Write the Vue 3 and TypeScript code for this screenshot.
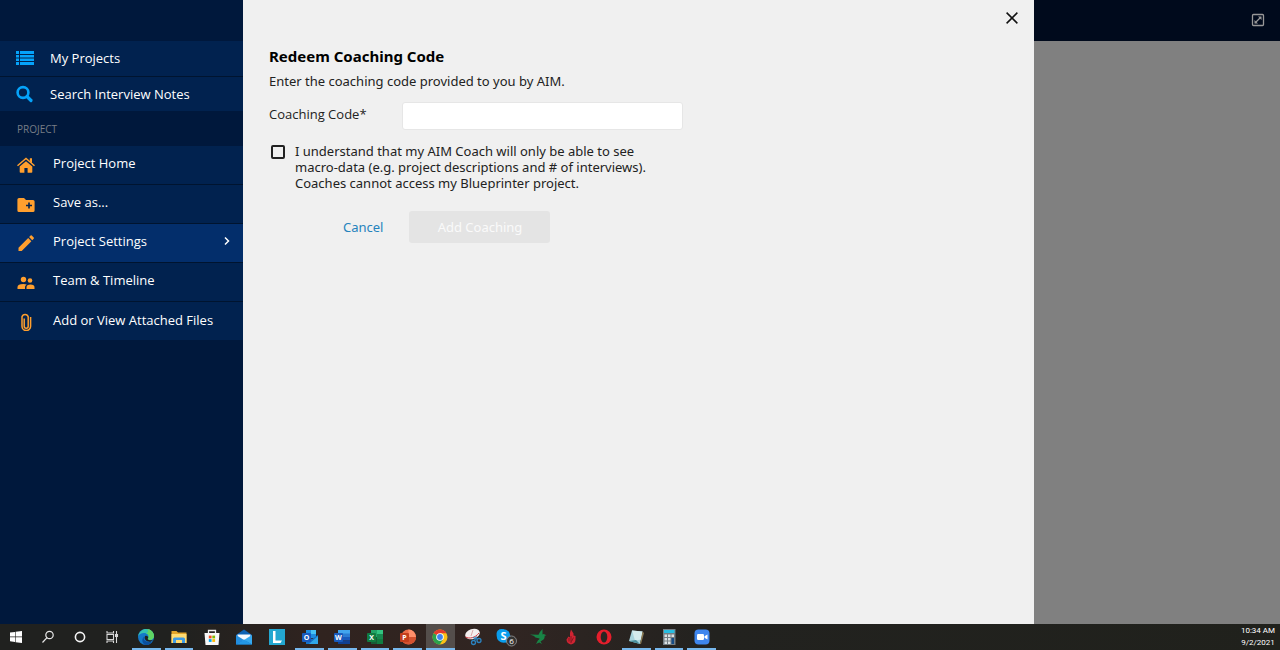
<script setup lang="ts">
import { computed, ref } from 'vue'

interface NavItem {
  label: string
  icon: string
  active?: boolean
}

const mainItems: NavItem[] = [
  { label: 'My Projects', icon: 'list' },
  { label: 'Search Interview Notes', icon: 'search' },
]

const projectItems: NavItem[] = [
  { label: 'Project Home', icon: 'home' },
  { label: 'Save as...', icon: 'folder' },
  { label: 'Project Settings', icon: 'pencil', active: true },
  { label: 'Team & Timeline', icon: 'team' },
  { label: 'Add or View Attached Files', icon: 'clip' },
]

interface TaskApp {
  name: string
  open?: boolean
  current?: boolean
}

const apps: TaskApp[] = [
  { name: 'Edge', open: true },
  { name: 'Explorer', open: true },
  { name: 'Store' },
  { name: 'Mail' },
  { name: 'Lync' },
  { name: 'Outlook', open: true },
  { name: 'Word', open: true },
  { name: 'Excel', open: true },
  { name: 'PowerPoint', open: true },
  { name: 'Chrome', open: true, current: true },
  { name: 'Snip' },
  { name: 'Skype' },
  { name: 'Hummingbird' },
  { name: 'Flame' },
  { name: 'Opera' },
  { name: 'Notepad', open: true },
  { name: 'Calculator', open: true },
  { name: 'Zoom', open: true },
]

const code = ref('')
const agreed = ref(false)
const ready = computed(() => code.value.trim() !== '' && agreed.value)
</script>

<template>
  <div class="screen">
    <div class="workspace">
      <aside class="sidebar">
        <nav class="group main-group">
          <a v-for="item in mainItems" :key="item.label" href="#" class="nav-row">
            <svg v-if="item.icon === 'list'" class="nav-icon blue" viewBox="0 0 18 18">
              <path d="M0 2h3v3H0zM4 2h14v3H4zM0 6h3v2.600H0zM4 6h14v2.600H4zM0 9.500h3v2.600H0zM4 9.500h14v2.600H4zM0 13h3v3H0zM4 13h14v3H4z" />
            </svg>
            <svg v-else class="nav-icon blue" viewBox="0 0 18 18">
              <circle cx="7" cy="7.500" r="5.400" fill="none" stroke="currentColor" stroke-width="2.600" />
              <path d="M11 11.500l4 4" fill="none" stroke="currentColor" stroke-width="3.200" stroke-linecap="round" />
            </svg>
            <span>{{ item.label }}</span>
          </a>
        </nav>
        <div class="section-title">PROJECT</div>
        <nav class="group project-group">
          <a v-for="item in projectItems" :key="item.label" href="#" class="nav-row" :class="{ active: item.active }">
            <svg v-if="item.icon === 'home'" class="nav-icon" viewBox="0 0 18 18">
              <path d="M9 5.300L2.700 10.500V16q0 .8.800.8H7.400V12h3.200v4.800h3.900q.8 0 .8-.8v-5.500z" />
              <path d="M.5 9.700L9 2.500l8.500 7.200" fill="none" stroke="currentColor" stroke-width="1.500" />
              <path d="M12.800 2.200h2.200v5l-2.200-2z" />
            </svg>
            <svg v-else-if="item.icon === 'folder'" class="nav-icon" viewBox="0 0 18 18">
              <path d="M2 3h5l2 2h7q1.600 0 1.600 1.600v8.800q0 1.600-1.600 1.600H2Q.4 17 .4 15.400V4.600Q.4 3 2 3z" />
              <path d="M12 7.500v6M9 10.500h6" stroke="#01224f" stroke-width="1.600" />
            </svg>
            <svg v-else-if="item.icon === 'pencil'" class="nav-icon" viewBox="0 0 18 18">
              <path d="M1.500 13.800L11.200 4l3.200 3.200L4.700 17H1.500zM12.100 3.100l1.500-1.500q.6-.6 1.200 0l1.900 1.900q.6.6 0 1.200l-1.500 1.500z" />
            </svg>
            <svg v-else-if="item.icon === 'team'" class="nav-icon" viewBox="0 0 18 18">
              <circle cx="6.500" cy="6.500" r="2.700" />
              <circle cx="13" cy="7.500" r="2.300" />
              <path d="M.5 16v-2q0-3 6-3 1.800 0 3.200.4Q8 12.500 8 14v2zM9.500 16v-1.600q0-2.800 4-2.800t4 2.800V16z" />
            </svg>
            <svg v-else class="nav-icon" viewBox="0 0 18 18">
              <path d="M7.200 5.500v7.700a2 2 0 0 0 4 0V3.800a3.200 3.200 0 0 0-6.200 0v9.500a4.300 4.300 0 0 0 8.600 0V4" fill="none" stroke="currentColor" stroke-width="1.500" />
            </svg>
            <span>{{ item.label }}</span>
            <svg v-if="item.active" class="chevron" viewBox="0 0 8 10">
              <path d="M2 1.500L5.500 5 2 8.500" fill="none" stroke="currentColor" stroke-width="1.500" />
            </svg>
          </a>
        </nav>
      </aside>

      <main class="panel">
        <button type="button" class="close" aria-label="Close">
          <svg viewBox="0 0 12 12"><path d="M.6.6l10.800 10.800M11.400.6L.6 11.400" stroke="currentColor" stroke-width="1.500" /></svg>
        </button>
        <form class="form" @submit.prevent>
          <h1>Redeem Coaching Code</h1>
          <p class="intro">Enter the coaching code provided to you by AIM.</p>
          <div class="field">
            <label for="code">Coaching Code*</label>
            <input id="code" v-model="code" type="text" />
          </div>
          <div class="consent">
            <input id="agree" v-model="agreed" type="checkbox" />
            <label for="agree">I understand that my AIM Coach will only be able to see macro-data (e.g. project descriptions and # of interviews). Coaches cannot access my Blueprinter project.</label>
          </div>
          <div class="actions">
            <button type="button" class="cancel">Cancel</button>
            <button type="submit" class="add" :class="{ ready }" :disabled="!ready">Add Coaching</button>
          </div>
        </form>
      </main>

      <div class="backdrop">
        <header class="topbar">
          <button type="button" class="expand" aria-label="Full screen">
            <svg viewBox="0 0 14 14">
              <rect x="1.500" y="1.500" width="11" height="11" rx="1" fill="none" stroke="currentColor" stroke-width="1.300" />
              <path d="M4.500 9.500l5-5" stroke="currentColor" stroke-width="1.300" />
              <path d="M7 3.500h3.500V7zM3.500 7v3.500H7z" fill="currentColor" />
            </svg>
          </button>
        </header>
      </div>
    </div>

    <footer class="taskbar">
      <div class="system">
        <button type="button" aria-label="Start">
          <svg viewBox="0 0 18 18"><path fill="#fff" d="M3 4.600l5-.7v4.700H3zM8.600 3.800L15 3v5.600H8.600zM3 9.300h5V14l-5-.7zM8.600 9.300H15V15l-6.400-.8z" /></svg>
        </button>
        <button type="button" aria-label="Search">
          <svg viewBox="0 0 18 18"><g fill="none" stroke="#e8e8e8" stroke-width="1.200"><circle cx="10.500" cy="7" r="3.700" /><path d="M8 9.700L3.500 14.500" /></g></svg>
        </button>
        <button type="button" aria-label="Cortana">
          <svg viewBox="0 0 18 18"><circle cx="9" cy="9" r="4.600" fill="none" stroke="#f4f4f4" stroke-width="1.600" /></svg>
        </button>
        <button type="button" aria-label="Task view">
          <svg viewBox="0 0 18 18"><path d="M4 3v2h6.500V3M4 15v-2h6.500v2M4 6.500h6.500v5H4zM13.500 3v12M12.500 6.500h2v2h-2z" fill="none" stroke="#d8d8d8" stroke-width="1.100" /></svg>
        </button>
      </div>
      <div class="apps">
        <button v-for="app in apps" :key="app.name" type="button" :aria-label="app.name" :class="{ open: app.open, current: app.current }">
          <svg v-if="app.name === 'Edge'" viewBox="0 0 18 18">
            <circle cx="9" cy="9" r="8" fill="#1478c8" />
            <path d="M1 8.500C2 3.500 5.500 1 9 1c5 0 8 3.500 8 7 0 2.600-2 4-4.200 4-1.600 0-2.300-.6-1.600-1.600C13 7.500 10 5 7 5 4 5 2 6.500 1 8.500z" fill="#35c1b1" />
            <path d="M10 1.100c4.500.5 7 3.900 7 6.900 0 2.600-2 4-4.200 4-1.600 0-2.300-.6-1.600-1.600 1.300-2.300-.2-4.400-2.200-5.100C11 5 12 3 10 1.100z" fill="#5fd463" />
            <path d="M7.300 8.200c-2 3 1.200 6.700 7.700 5.700-1.300 2-4 3.100-6 3.100-3.500-.6-5.300-5.600-1.700-8.800z" fill="#0c4f9e" />
            <path d="M8.200 8c1-.9 3 0 3 1.300 0 .8-.8 1.300-.3 2 .8 1.100 3.500 1.500 5 .4-1 1.900-3 2.200-4.500 1.900C8.300 13 6.700 9.800 8.200 8z" fill="#20211f" />
          </svg>
          <svg v-else-if="app.name === 'Explorer'" viewBox="0 0 18 18">
            <path d="M1.500 3h5l1.500 1.500h8.500V15h-15z" fill="#e3a52b" />
            <path d="M1.500 6h15v9h-15z" fill="#ffdb72" />
            <path d="M3 15v-4q0-1.500 1.500-1.500h9q1.500 0 1.500 1.500v4h-3v-3H6v3z" fill="#3e9be5" />
          </svg>
          <svg v-else-if="app.name === 'Store'" viewBox="0 0 18 18">
            <path d="M5.500 6V2.500h7V6" fill="none" stroke="#eee" stroke-width="1.300" />
            <path d="M1.500 5h15l-1 12h-13z" fill="#f7f7f7" />
            <path d="M5.800 7.600h2.800v2.800H5.800z" fill="#f25022" /><path d="M9.300 7.600h2.800v2.800H9.300z" fill="#7fba00" /><path d="M5.800 11.100h2.800v2.800H5.800z" fill="#00a4ef" /><path d="M9.300 11.100h2.800v2.800H9.300z" fill="#ffb900" />
          </svg>
          <svg v-else-if="app.name === 'Mail'" viewBox="0 0 18 18">
            <path d="M1 7l8-5.500L17 7v9.500H1z" fill="#0c62b4" /><path d="M2.500 6.500h13v6h-13z" fill="#f4f9ff" /><path d="M1 7l8 5-8 4.500z" fill="#238ee0" /><path d="M17 7l-8 5 8 4.500z" fill="#36a9ef" /><path d="M1 16.500l8-5 8 5z" fill="#2397e4" />
          </svg>
          <svg v-else-if="app.name === 'Lync'" viewBox="0 0 18 18">
            <rect x="1" y="1" width="16" height="16" fill="#23a7d0" /><path d="M5 3h2.500v9.500L5 15zM7.500 12.500H14L12.500 15H5z" fill="#fff" />
          </svg>
          <svg v-else-if="['Outlook', 'Word', 'Excel'].includes(app.name)" viewBox="0 0 18 18">
            <g v-if="app.name === 'Outlook'">
              <path d="M5 2h10v8H5z" fill="#1e8de0" /><path d="M10 2h5v4h-5z" fill="#46c2f5" /><path d="M5 7l6 4 6-4v9H5z" fill="#1570c5" /><path d="M17 8l-9 8h9z" fill="#31a7e9" />
            </g>
            <g v-else-if="app.name === 'Word'">
              <path d="M5 2h12v4H5z" fill="#41a5ee" /><path d="M5 5.500h12V9H5z" fill="#2b7cd3" /><path d="M5 9h12v3.500H5z" fill="#185abd" /><path d="M5 12.500h12V16H5z" fill="#103f91" />
            </g>
            <g v-else>
              <path d="M5 2h6v7H5z" fill="#21a366" /><path d="M11 2h6v4h-6z" fill="#33c481" /><path d="M11 6h6v5h-6z" fill="#18884f" /><path d="M5 9h6v7H5z" fill="#185c37" /><path d="M11 11h6v5h-6z" fill="#107c41" />
            </g>
            <rect x="1" y="5" width="9" height="9" rx="1" :fill="app.name === 'Excel' ? '#107c41' : '#185abd'" />
            <text x="5.500" y="12" text-anchor="middle">{{ app.name === 'Excel' ? 'X' : app.name.charAt(0) }}</text>
          </svg>
          <svg v-else-if="app.name === 'PowerPoint'" viewBox="0 0 18 18">
            <circle cx="9.500" cy="9" r="7.500" fill="#ed6c47" /><path d="M9.500 1.500A7.500 7.500 0 0 1 17 9H9.500z" fill="#ff8f6b" /><path d="M3 12.500A7.500 7.500 0 0 0 17 9h-7z" fill="#d35230" />
            <rect x="1" y="5" width="9" height="9" rx="1" fill="#c43e1c" /><text x="5.500" y="12" text-anchor="middle">P</text>
          </svg>
          <svg v-else-if="app.name === 'Chrome'" viewBox="0 0 18 18">
            <circle cx="9" cy="9" r="7.500" fill="#fbc116" /><path d="M9 9L2.500 5.250A7.500 7.500 0 0 1 15.500 5.250H9z" fill="#e33b2e" /><path d="M2.500 5.250L9 9l3 2.500-3.200 5A7.500 7.500 0 0 1 2.500 5.250z" fill="#2ba24c" /><circle cx="9" cy="9" r="3.800" fill="#fff" /><circle cx="9" cy="9" r="2.900" fill="#3f83f0" />
          </svg>
          <svg v-else-if="app.name === 'Snip'" viewBox="0 0 18 18">
            <ellipse cx="8.500" cy="6" rx="7.500" ry="5" transform="rotate(-18 8.500 6)" fill="#f2eeee" /><path d="M1.500 9c4 2 9.500 1 13.500-4" fill="none" stroke="#d33d43" stroke-width="1" /><path d="M9 2l-2 6" stroke="#d08a8a" stroke-width=".7" />
            <g fill="none" stroke="#2b82bf" stroke-width="1.300"><circle cx="9.500" cy="14.500" r="2" /><circle cx="15" cy="12.500" r="2" /><path d="M10.500 12.500l2-4M13.500 11L9 9.500" /></g>
          </svg>
          <svg v-else-if="app.name === 'Skype'" class="wide" viewBox="0 0 22 20">
            <circle cx="6.500" cy="7" r="5" fill="#0a9ded" /><circle cx="10.500" cy="10.500" r="5" fill="#0a8be0" /><circle cx="8.500" cy="9" r="6.800" fill="#0a9ded" /><text x="8.500" y="13" class="skype-letter" text-anchor="middle">S</text>
            <circle cx="16.500" cy="14" r="5" fill="#333" stroke="#999" stroke-width=".8" /><text x="16.500" y="17" class="badge" text-anchor="middle">6</text>
          </svg>
          <svg v-else-if="app.name === 'Hummingbird'" viewBox="0 0 18 18">
            <path d="M13.500 1v5.500q1.200-1.200 2.300 0l1.700.7-1.800.6q.2 3.400-2.700 4.700l-1.500 1L13 16l-2.800-1.500L7 16l2-3.800q1.500-.7 1.500-1.700L6.500 9.500 5 8 1 6.500l8.500.3Q10.500 4 13.500 1z" fill="#188446" />
          </svg>
          <svg v-else-if="app.name === 'Flame'" viewBox="0 0 18 18">
            <path d="M9 1.500l2.500 4v2l2 .5v3.500q0 4-4.500 5-4.500-1-4.500-5l2-3 1.500 1V5z" fill="#cf2432" /><path d="M9 8v7M7 10v3.500M11.500 9.500l-2 4" stroke="#74121a" stroke-width=".8" />
          </svg>
          <svg v-else-if="app.name === 'Opera'" viewBox="0 0 18 18">
            <circle cx="9" cy="9" r="7.500" fill="#e61e2c" /><ellipse cx="9" cy="9" rx="3.300" ry="5.600" fill="#292522" />
          </svg>
          <svg v-else-if="app.name === 'Notepad'" viewBox="0 0 18 18">
            <path d="M5 2.500l10.500 1L13 16 2 13z" fill="#a8d4dd" /><path d="M5 2.500l10.500 1-1.500 8-6 1z" fill="#d4ebed" /><path d="M2 13l7-1 4 4z" fill="#498e9c" /><path d="M15.500 3.500L17 5l-3 11h-1z" fill="#8b7b55" />
          </svg>
          <svg v-else-if="app.name === 'Calculator'" viewBox="0 0 18 18">
            <rect x="3" y="1" width="12.500" height="16" fill="#747d83" /><path d="M4 2h10.500v3H4z" fill="#28bde1" /><path d="M4.500 6.500H7V9H4.500zM8 6.500h2.500V9H8zM11.500 6.500H14V9h-2.500zM4.500 10H7v2.500H4.500zM8 10h2.500v2.500H8zM4.500 13.500H7V16H4.500zM8 13.500h2.500V16H8z" fill="#dbe1e4" /><path d="M11.500 10H14v6h-2.500z" fill="#164c86" />
          </svg>
          <svg v-else viewBox="0 0 18 18">
            <rect x="1.500" y="1.500" width="15" height="15" rx="4" fill="#3f86ee" /><rect x="4" y="6" width="7" height="6" rx="1.200" fill="#fff" /><path d="M11.500 8.200L14.500 6.500v5l-3-1.700z" fill="#fff" />
          </svg>
        </button>
      </div>
      <div class="clock">
        <time>10:34 AM</time>
        <time>9/2/2021</time>
      </div>
    </footer>
  </div>
</template>

<style scoped>
.screen {
  display: flex;
  flex-direction: column;
  min-height: 100vh;
  font-family: "Open Sans", "Noto Sans", sans-serif;
  font-size: 13px;
  color: #222;
}
* { box-sizing: border-box; }
button { padding: 0; border: 0; background: none; font: inherit; color: inherit; }
svg { display: block; fill: currentColor; }
.workspace { flex: 1; display: grid; grid-template-columns: 243px 1fr 246px; }
.sidebar { background: #00183c; padding-top: 41px; }
.nav-row {
  display: flex;
  align-items: center;
  height: 39px;
  padding: 0 12px 4px 17px;
  gap: 18px;
  background: #01224f;
  border-bottom: 1px solid #00142f;
  color: #fff;
  text-decoration: none;
}
.main-group .nav-row { height: 36px; padding: 0 12px 1px 16px; gap: 16px; }
.main-group .nav-row:last-child { height: 34px; padding-bottom: 0; border-bottom: 0; }
.project-group .nav-row:last-child { height: 38px; padding-bottom: 2px; border-bottom: 0; }
.nav-row.active { background: #032e6b; }
.nav-icon { width: 18px; height: 18px; color: #ff9f2e; }
.project-group .nav-icon { position: relative; top: 2px; }
.nav-icon.blue { color: #05a3fa; }
.chevron { width: 8px; height: 10px; margin-left: auto; }
.section-title { height: 35px; padding: 0 17px; line-height: 37px; font-size: 10px; color: #777d86; }
.panel { position: relative; background: #f0f0f0; padding: 46px 26px; font-family: "Noto Sans", "Open Sans", sans-serif; }
.close { position: absolute; top: 12px; right: 16px; width: 12px; height: 12px; color: #111; }
.form { max-width: 414px; }
h1 { margin: 0; font-size: 15px; line-height: 21px; font-weight: 700; color: #000; }
.intro { margin: 5px 0 0; font-size: 13px; line-height: 18px; }
.field { display: flex; margin-top: 12px; }
.field label { width: 133px; line-height: 25px; font-family: "Open Sans", "Noto Sans", sans-serif; font-size: 13px; }
.field input { flex: 1; min-width: 0; height: 28px; padding: 0 8px; border: 1px solid #e6e6e6; border-radius: 3px; background: #fff; font: inherit; }
.consent { display: flex; align-items: flex-start; gap: 10px; margin-top: 13px; padding-left: 2px; }
.consent input { appearance: none; flex: none; width: 14px; height: 14px; margin: 2px 0 0; border: 2px solid #222; border-radius: 2px; }
.consent input:checked { background: #222; }
.consent label { max-width: 370px; font-size: 13px; line-height: 16px; }
.actions { display: flex; align-items: center; gap: 26px; margin-top: 20px; padding-left: 74px; font-size: 13px; }
.cancel { color: #2583bd; }
.add { width: 141px; height: 32px; border-radius: 3px; background: #e4e4e4; color: #fafafa; }
.add.ready { background: #2583bd; }
.backdrop { background: #808080; }
.topbar { display: flex; justify-content: flex-end; height: 41px; padding: 13px 15px; background: #000a1c; }
.expand { width: 14px; height: 14px; color: #989898; }
.taskbar { display: flex; height: 26px; background: linear-gradient(90deg, #20211f 0%, #20211f 14%, #30231f 25%, #302522 40%, #22221f 56%, #20211c 100%); color: #fff; }
.taskbar svg { width: 18px; height: 18px; }
.taskbar svg.wide { width: 22px; height: 20px; }
.system { display: flex; width: 132px; }
.system button { display: grid; place-items: center; width: 32px; height: 26px; }
.apps { display: flex; width: 584px; gap: 4px; }
.apps button { display: grid; place-items: center; flex: 1; min-width: 0; height: 26px; border-bottom: 2px solid transparent; padding-top: 2px; }
.apps .open { border-bottom-color: #77b8ed; }
.apps .current { background: #544e4b; }
.apps text { font-size: 7px; font-weight: 700; fill: #fff; }
.apps .skype-letter { font-size: 11px; }
.apps .badge { font-size: 8px; font-weight: 400; }
.clock { display: flex; flex-direction: column; align-items: center; margin-left: auto; padding: 1px 5px 0 0; font-family: Roboto, sans-serif; font-size: 8px; line-height: 12px; }
</style>

<style>
body { margin: 0; }
</style>
